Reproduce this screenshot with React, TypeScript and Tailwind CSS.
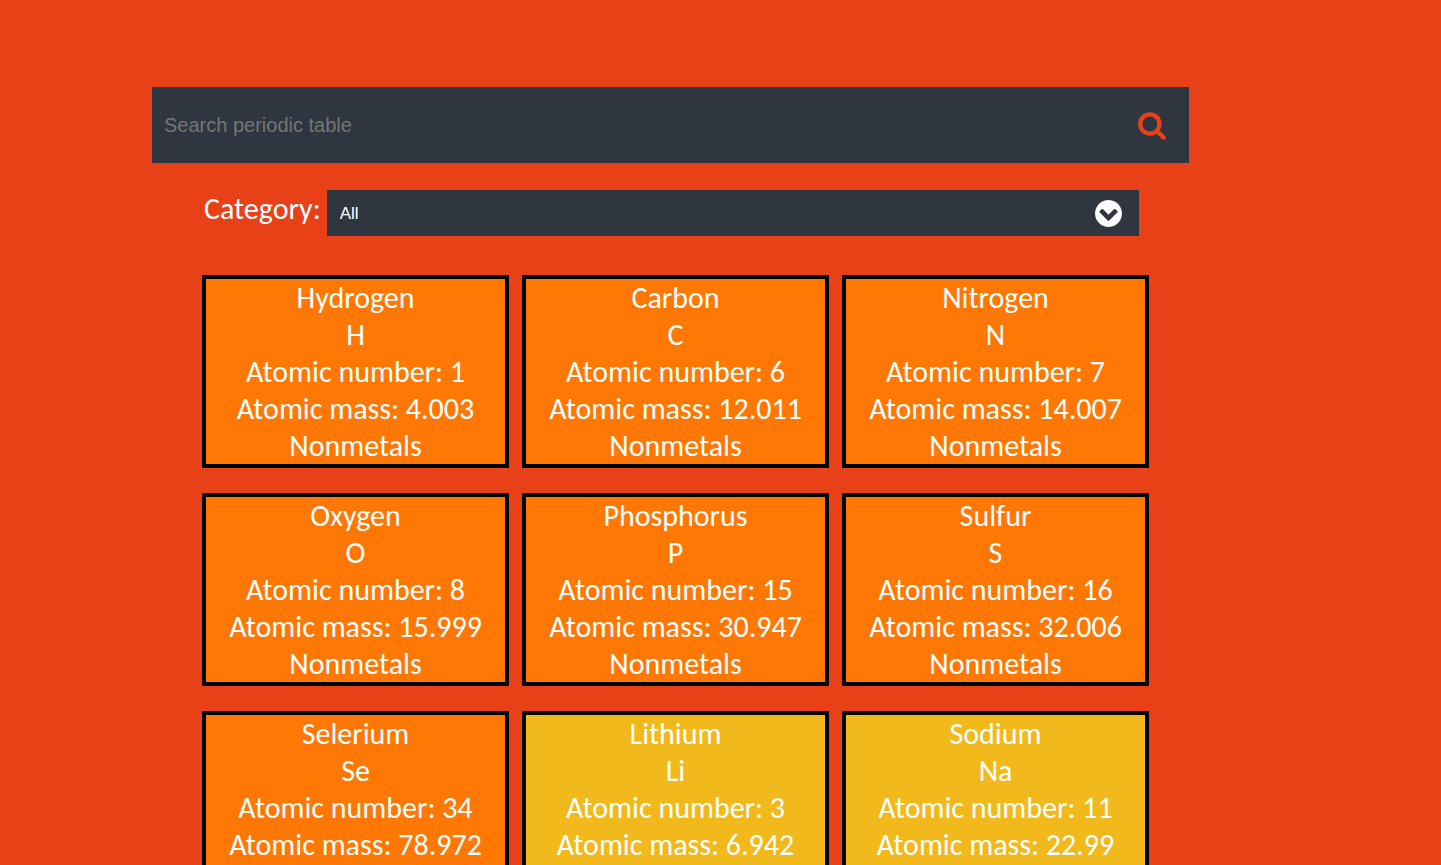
import React, { useState } from 'react'

interface Element {
  name: string
  symbol: string
  number: number
  mass: string
  category: string
}

const elements: Element[] = [
  { name: 'Hydrogen', symbol: 'H', number: 1, mass: '4.003', category: 'Nonmetals' },
  { name: 'Carbon', symbol: 'C', number: 6, mass: '12.011', category: 'Nonmetals' },
  { name: 'Nitrogen', symbol: 'N', number: 7, mass: '14.007', category: 'Nonmetals' },
  { name: 'Oxygen', symbol: 'O', number: 8, mass: '15.999', category: 'Nonmetals' },
  { name: 'Phosphorus', symbol: 'P', number: 15, mass: '30.947', category: 'Nonmetals' },
  { name: 'Sulfur', symbol: 'S', number: 16, mass: '32.006', category: 'Nonmetals' },
  { name: 'Selerium', symbol: 'Se', number: 34, mass: '78.972', category: 'Nonmetals' },
  { name: 'Lithium', symbol: 'Li', number: 3, mass: '6.942', category: 'Alkali metals' },
  { name: 'Sodium', symbol: 'Na', number: 11, mass: '22.99', category: 'Alkali metals' },
]

const categoryColors: Record<string, string> = {
  Nonmetals: 'bg-[#ff7805]',
  'Alkali metals': 'bg-[#f1b91b]',
}

function SearchIcon() {
  return (
    <svg viewBox="0 0 1792 1792" className="w-[30px] h-[30px]" fill="currentColor" aria-hidden="true">
      <path d="M1216 832q0-185-131.500-316.500t-316.500-131.500-316.500 131.500-131.500 316.500 131.500 316.500 316.500 131.500 316.500-131.500 131.500-316.500zm512 832q0 52-38 90t-90 38q-54 0-90-38l-343-342q-179 124-399 124-143 0-273.500-55.500t-225-150-150-225-55.500-273.500 55.500-273.500 150-225 225-150 273.500-55.500 273.500 55.500 225 150 150 225 55.500 273.500q0 220-124 399l343 343q37 37 37 90z" />
    </svg>
  )
}

function ChevronCircleIcon() {
  return (
    <svg
      viewBox="128 128 1536 1536"
      className="absolute right-[17px] top-[10px] w-[27px] h-[27px] text-white pointer-events-none"
      fill="currentColor"
      aria-hidden="true"
    >
      <path d="M941 1299l454-454q19-19 19-45t-19-45l-102-102q-19-19-45-19t-45 19l-307 307-307-307q-19-19-45-19t-45 19l-102 102q-19 19-19 45t19 45l454 454q19 19 45 19t45-19zm723-403q0 209-103 385.500t-279.500 279.500-385.500 103-385.500-103-279.500-279.500-103-385.500 103-385.500 279.500-279.500 385.500-103 385.500 103 279.500 279.500 103 385.500z" />
    </svg>
  )
}

function ElementCard({ element }: { element: Element }) {
  return (
    <div className={`border-4 border-black text-center ${categoryColors[element.category]}`}>
      <p>{element.name}</p>
      <p>{element.symbol}</p>
      <p>Atomic number: {element.number}</p>
      <p>Atomic mass: {element.mass}</p>
      <p>{element.category}</p>
    </div>
  )
}

export default function App() {
  const [query, setQuery] = useState('')
  const [category, setCategory] = useState('All')

  const visible = elements.filter(
    (el) =>
      (category === 'All' || el.category === category) &&
      el.name.toLowerCase().includes(query.trim().toLowerCase())
  )

  return (
    <div className="min-h-screen bg-[#e84118] pt-[87px] pb-12 pr-[100px] font-[Carlito,Lato,sans-serif] text-[30px] leading-[37px] text-white">
      <main className="mx-auto w-full max-w-[1037px]">
        {/* Search bar */}
        <form
          className="flex items-center bg-[#2f3640] h-[76px] pl-3 pr-[22px]"
          onSubmit={(e) => e.preventDefault()}
        >
          <input
            type="text"
            aria-label="Search periodic table"
            placeholder="Search periodic table"
            value={query}
            onChange={(e) => setQuery(e.target.value)}
            className="flex-1 min-w-0 bg-transparent outline-none font-['Liberation_Sans',sans-serif] text-xl text-white placeholder:text-[#757575]"
          />
          <button type="submit" aria-label="Search" className="text-[#e84118] cursor-pointer">
            <SearchIcon />
          </button>
        </form>

        {/* Category filter */}
        <div className="mt-[27px] flex pl-[52px] pr-[50px] gap-1.5">
          <label htmlFor="category">Category:</label>
          <div className="relative flex-1">
            <select
              id="category"
              value={category}
              onChange={(e) => setCategory(e.target.value)}
              className="block w-full h-[46px] appearance-none bg-[#2f3640] px-[13px] font-['Liberation_Sans',sans-serif] text-[17px] text-white outline-none"
            >
              <option>All</option>
              <option>Nonmetals</option>
              <option>Alkali metals</option>
            </select>
            <ChevronCircleIcon />
          </div>
        </div>

        {/* Elements */}
        <div className="mt-[39px] grid grid-cols-3 gap-x-[13px] gap-y-[25px] pl-[50px] pr-10">
          {visible.map((el) => (
            <ElementCard key={el.symbol} element={el} />
          ))}
        </div>
      </main>
    </div>
  )
}
